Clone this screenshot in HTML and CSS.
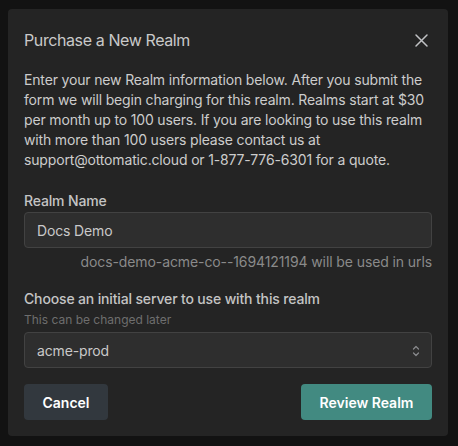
FILE: index.html
```html
<!DOCTYPE html>
<html>
<head>
<meta charset="utf-8">
<link rel="stylesheet" href="styles.css">
</head>
<body>
<div class="modal">
  <div class="header">
    <h2 class="title">Purchase a New Realm</h2>
    <button class="close" aria-label="Close">
      <svg width="15" height="15" viewBox="0 0 15 15"><path d="M2 2 L13 13 M13 2 L2 13" stroke="#c1c2c5" stroke-width="1.5" stroke-linecap="round" fill="none"/></svg>
    </button>
  </div>
  <p class="intro">Enter your new Realm information below. After you submit the form we will begin charging for this realm. Realms start at $30 per month up to 100 users. If you are looking to use this realm with more than 100 users please contact us at support@ottomatic.cloud or 1-877-776-6301 for a quote.</p>
  <div class="field">
    <label class="label">Realm Name</label>
    <div class="input">Docs Demo</div>
    <div class="hint">docs-demo-acme-co--1694121194 will be used in urls</div>
  </div>
  <div class="field second">
    <label class="label">Choose an initial server to use with this realm</label>
    <div class="sub">This can be changed later</div>
    <div class="input select">
      <span>acme-prod</span>
      <svg width="10" height="14" viewBox="0 0 10 14"><path d="M2.5 5 L5 2.5 L7.5 5 M2.5 9 L5 11.5 L7.5 9" stroke="#8a8b8e" stroke-width="1.2" fill="none" stroke-linecap="round" stroke-linejoin="round"/></svg>
    </div>
  </div>
  <div class="actions">
    <button class="btn cancel">Cancel</button>
    <button class="btn primary">Review Realm</button>
  </div>
</div>
</body>
</html>
```

FILE: styles.css
```css
* { box-sizing: border-box; }
html, body { margin: 0; padding: 0; }
body {
  width: 458px;
  height: 446px;
  background: #121212;
  font-family: Inter, "Noto Sans", sans-serif;
  color: #c1c2c5;
  overflow: hidden;
  padding: 9px 10px 0 8px;
}
.modal {
  width: 440px;
  background: #242424;
  border-radius: 4px;
  padding: 16px;
}
.header {
  display: flex;
  align-items: center;
  justify-content: space-between;
  height: 30px;
  margin-bottom: 15px;
}
.title {
  margin: 0;
  font-size: 16px;
  font-weight: 400;
  letter-spacing: -0.4px;
  color: #c9c9c9;
}
.close {
  width: 28px;
  height: 28px;
  margin-right: -3px;
  border: 0;
  background: transparent;
  padding: 0;
  display: flex;
  align-items: center;
  justify-content: center;
}
.intro {
  margin: 0 0 20px;
  font-size: 14px;
  line-height: 20px;
  letter-spacing: -0.16px;
  color: #cccccc;
}
.field { display: flex; flex-direction: column; }
.label {
  font-size: 14px;
  line-height: 22px;
  font-weight: 500;
  letter-spacing: -0.15px;
  color: #c4c4c4;
}
.input {
  height: 36px;
  background: #2e2e2e;
  border: 1px solid #424242;
  border-radius: 4px;
  padding: 0 12px;
  display: flex;
  align-items: center;
  font-size: 14px;
  letter-spacing: -0.15px;
  color: #c9c9c9;
}
.hint {
  margin-top: 4px;
  text-align: right;
  font-size: 14px;
  line-height: 20px;
  letter-spacing: -0.1px;
  color: #8a8a8a;
}
.second { margin-top: 16px; }
.sub {
  font-size: 12px;
  line-height: 20px;
  color: #6e6e6e;
  margin-bottom: 2px;
}
.select { justify-content: space-between; padding-right: 10px; }
.select svg { margin-top: 1px; }
.actions {
  display: flex;
  justify-content: space-between;
  margin-top: 16px;
}
.btn {
  height: 36px;
  border: 0;
  border-radius: 4px;
  font-family: Inter, "Noto Sans", sans-serif;
  font-size: 14px;
  font-weight: 600;
  color: #ffffff;
  padding: 0 12px;
}
.cancel { background: #32383e; width: 84px; }
.primary { background: #428a81; width: 131px; }
```
